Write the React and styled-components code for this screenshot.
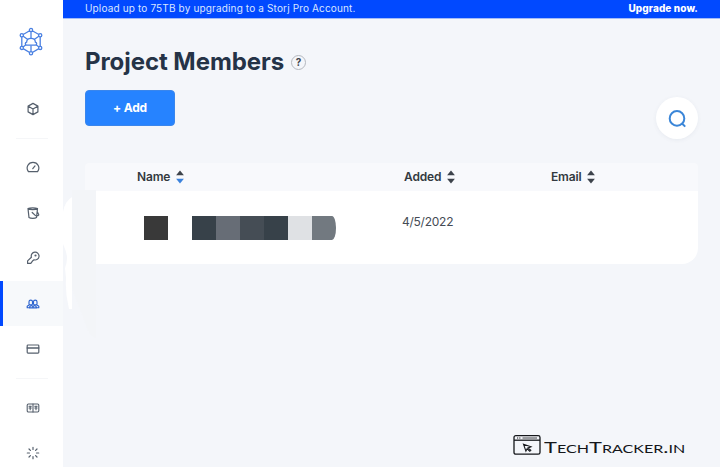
import React from 'react';
import styled, { createGlobalStyle } from 'styled-components';

const GlobalStyle = createGlobalStyle`
  * { box-sizing: border-box; }
  body { margin: 0; overflow: hidden; font-family: Inter, "Liberation Sans", sans-serif; }
`;

const Page = styled.div`
  display: flex;
  width: 720px;
  height: 467px;
  overflow: hidden;
  background: #f4f6fa;
`;

const Sidebar = styled.nav`
  flex: 0 0 63px;
  display: flex;
  flex-direction: column;
  align-items: center;
  background: #fff;
  color: #56606d;
`;

const LogoLink = styled.div`
  flex: 0 0 86px;
  display: flex;
  align-items: flex-start;
  padding: 27px 1px 0 0;
  color: #4a80e2;
`;

const NavItem = styled.div`
  flex: 0 0 45.4px;
  width: 63px;
  display: flex;
  align-items: center;
  justify-content: center;
  border-left: 3px solid ${(p) => (p.$active ? '#0149ff' : 'transparent')};
  background: ${(p) => (p.$active ? '#f7f9fb' : 'transparent')};
  color: ${(p) => (p.$active ? '#2a62cf' : 'inherit')};
`;

const Divider = styled.div`
  flex: 0 0 1px;
  width: 32px;
  margin: 6.3px 0 6px;
  background: #f5f6f8;
`;

const Main = styled.main`
  position: relative;
  flex: 1;
  display: flex;
  flex-direction: column;
  min-width: 0;
`;

const Banner = styled.div`
  flex: 0 0 18px;
  display: flex;
  justify-content: space-between;
  padding: 0 22px;
  background: #0149ff;
  color: #d9e6ff;
  font-size: 10px;
  line-height: 17px;
  white-space: nowrap;
  box-shadow: 0 1px 0 #a3bbf8;
`;

const BannerText = styled.span`
  letter-spacing: 0.15px;
`;

const UpgradeLink = styled.span`
  color: #fff;
  font-weight: 800;
  letter-spacing: 0.1px;
`;

const Content = styled.div`
  flex: 1;
  display: flex;
  flex-direction: column;
  padding: 28px 22px 0;
`;

const TitleRow = styled.div`
  display: flex;
  align-items: center;
  gap: 7px;
  height: 32px;
`;

const Title = styled.h1`
  margin: 0;
  color: #253347;
  font-size: 24px;
  line-height: 32px;
  font-weight: 700;
  letter-spacing: -0.06px;
  white-space: nowrap;
`;

const Help = styled.span`
  display: flex;
  align-items: center;
  justify-content: center;
  width: 15px;
  height: 15px;
  border: 1px solid #b4b8bf;
  border-radius: 50%;
  color: #3c434c;
  font-size: 10px;
  font-weight: 700;
`;

const Actions = styled.div`
  display: flex;
  justify-content: space-between;
  align-items: flex-start;
  height: 73px;
  margin-top: 12px;
`;

const AddButton = styled.button`
  width: 90px;
  height: 36px;
  padding: 0 0 1px;
  border: 1px solid #3a86ec;
  border-radius: 4px;
  background: #2683ff;
  color: #fff;
  font: 700 12px Inter, sans-serif;
  letter-spacing: -0.15px;
`;

const SearchButton = styled.button`
  display: flex;
  align-items: center;
  justify-content: center;
  width: 42px;
  height: 42px;
  margin-top: 7px;
  padding: 1px 0 0;
  border: 0;
  border-radius: 50%;
  background: #fff;
  box-shadow: 0 1px 4px rgba(70, 90, 120, 0.07);
  color: #3b86d8;
`;

const Columns = styled.div`
  display: grid;
  grid-template-columns: 267px 147px 1fr;
  align-items: center;
  flex: 0 0 28px;
  padding: 0 0 1px 52px;
  border-radius: 4px 4px 0 0;
  background: #f8f9fc;
`;

const ColumnHead = styled.div`
  display: flex;
  align-items: center;
  gap: 6px;
  color: #333940;
  font-size: 12px;
  font-weight: 600;
  letter-spacing: -0.16px;
`;

const MemberRow = styled.div`
  display: grid;
  grid-template-columns: 48px 210px 1fr;
  align-items: start;
  height: 73px;
  margin-left: 11px;
  padding: 25px 0 0 48px;
  border-radius: 0 0 16px 0;
  background: #fff;
`;

const Avatar = styled.div`
  width: 24px;
  height: 24px;
  background: #393939;
`;

const MaskedName = styled.div`
  display: flex;
  width: 144px;
  height: 24px;
  overflow: hidden;
  border-radius: 0 4px 4px 0 / 0 12px 12px 0;
`;

const Block = styled.span`
  flex: 1;
  background: ${(p) => p.$tone};
`;

const AddedDate = styled.span`
  margin-top: -2px;
  color: #454b55;
  font-size: 12px;
  line-height: 16px;
  letter-spacing: -0.25px;
`;

const EdgeShapes = styled.svg`
  position: absolute;
  left: 0;
  top: 190px;
`;

const Watermark = styled.div`
  position: absolute;
  left: 450px;
  top: 434px;
  display: flex;
  gap: 3px;
  color: #15171b;
`;

const WatermarkText = styled.span`
  padding-top: 2px;
  font: 400 15px/22px Lato, sans-serif;
  font-variant: small-caps;
  white-space: nowrap;
  transform: scaleX(1.46);
  transform-origin: left;
`;

function Icon({ size = 14, weight = 1.2, children }) {
  return (
    <svg width={size} height={size} viewBox="0 0 14 14" fill="none" stroke="currentColor"
      strokeWidth={weight} strokeLinecap="round" strokeLinejoin="round">
      {children}
    </svg>
  );
}

const Logo = () => (
  <svg width="24" height="30" viewBox="0 0 24 30" fill="none" stroke="currentColor" strokeWidth="1.3">
    <path d="M12 3 21.2 8.3v12.6L12 26.2 2.8 20.9V8.3zM12 3v8.5M2.8 8.3l6 4.2M21.2 8.3l-6 4.2M2.8 20.9l4.4-3.4M21.2 20.9l-4.4-3.4M12 18.3v8" />
    <path d="M7.6 18.2c-1.7-.2-1.7-2.4 0-3 .3-5 8.5-5 8.8 0 1.7.6 1.7 2.8 0 3z" fill="#fff" />
    <g fill="#fff">
      <circle cx="12" cy="3" r="1.6" /><circle cx="21.2" cy="8.3" r="1.6" />
      <circle cx="21.2" cy="20.9" r="1.6" /><circle cx="12" cy="26.2" r="1.6" />
      <circle cx="2.8" cy="20.9" r="1.6" /><circle cx="2.8" cy="8.3" r="1.6" />
    </g>
  </svg>
);

const CubeIcon = () => (
  <Icon><path d="m7 1.4 4.9 2.7v5.8L7 12.6 2.1 9.9V4.1zM2.3 4.2 7 6.9l4.7-2.7M7 6.9v5.5" /></Icon>
);
const GaugeIcon = () => (
  <Icon><path d="M2.4 11.6C-.6 7.5 2.2 2.3 7 2.3s7.6 5.2 4.6 9.3zM6.8 8.7l2.2-2.8" /></Icon>
);
const BucketIcon = () => (
  <Icon>
    <path d="M2 2.6c2-1.1 7.5-1.1 9.5 0l-1 9c-1.5 1.1-6 1.1-7.5 0zM2 2.8c2 1.2 7.5 1.2 9.5 0M6.2 6.5l3.3 3.1M11.3 5.8l1.4 2.7c.3 1-.8 1.5-2 .9" />
  </Icon>
);
const KeyIcon = () => (
  <Icon>
    <path d="M5.4 6.2A3.9 3.9 0 1 1 8 8.8L6.8 9.7l-2 2.7H1.6V9.9z" />
    <circle cx="9.5" cy="4.5" r=".5" />
  </Icon>
);
const TeamIcon = () => (
  <Icon weight={1.15}>
    <path d="M3 7V4.8c0-2.2 3.5-2.2 3.5 0V7c0 1.2-3.5 1.2-3.5 0zM7.5 7V4.8c0-2.2 3.5-2.2 3.5 0V7c0 1.2-3.5 1.2-3.5 0z" />
    <path d="M3 8.1 1.2 9.2v1.5h2M11 8.1l1.8 1.1v1.5h-2M3.5 10.9c0-3 3.5-3 3.5-.5 0-2.5 3.5-2.5 3.5.5z" />
  </Icon>
);
const CardIcon = () => (
  <Icon><rect x="1.2" y="3" width="11.6" height="8.1" rx=".8" /><path d="M1.3 6h11.4" strokeWidth="1.6" /></Icon>
);
const BookIcon = () => (
  <Icon weight={1.1}><rect x="1.2" y="3" width="11.6" height="8" rx="1.2" /><path d="M7 3v8M3 5.3h2.3M3 7h2.3M4.2 5.3v3.5M8.8 5.3h2.3M8.8 7h2.3M10 5.3v3.5" /></Icon>
);
const QuickIcon = () => (
  <Icon weight={1.2}>
    <path d="M7 1.3v2.2M7 10.5v2.2M1.3 7h2.2M10.5 7h2.2M3 3l1.4 1.4M9.6 9.6 11 11M3 11l1.4-1.4M9.6 4.4 11 3" />
  </Icon>
);

const SortArrows = ({ activeDown }) => (
  <svg width="8" height="14" viewBox="0 0 8 14">
    <path d="M4 .4 7.9 5.2H.1z" fill="#3d434b" />
    <path d="M4 13.6 7.9 8.8H.1z" fill={activeDown ? '#3b82dc' : '#3d434b'} />
  </svg>
);

const NAV = [
  { id: 'projects', Glyph: CubeIcon, dividerAfter: true },
  { id: 'dashboard', Glyph: GaugeIcon },
  { id: 'buckets', Glyph: BucketIcon },
  { id: 'access', Glyph: KeyIcon },
  { id: 'users', Glyph: TeamIcon, active: true },
  { id: 'billing', Glyph: CardIcon, dividerAfter: true },
  { id: 'resources', Glyph: BookIcon },
  { id: 'quickstart', Glyph: QuickIcon },
];

const NAME_TONES = ['#374149', '#676d76', '#454d55', '#374149', '#dfe1e4', '#727980'];

export default function App() {
  return (
    <>
      <GlobalStyle />
      <Page>
        <Sidebar>
          <LogoLink><Logo /></LogoLink>
          {NAV.map(({ id, Glyph, active, dividerAfter }) => (
            <React.Fragment key={id}>
              <NavItem $active={active}><Glyph /></NavItem>
              {dividerAfter && <Divider />}
            </React.Fragment>
          ))}
        </Sidebar>
        <Main>
          <Banner>
            <BannerText>Upload up to 75TB by upgrading to a Storj Pro Account.</BannerText>
            <UpgradeLink>Upgrade now.</UpgradeLink>
          </Banner>
          <Content>
            <TitleRow>
              <Title>Project Members</Title>
              <Help>?</Help>
            </TitleRow>
            <Actions>
              <AddButton>+ Add</AddButton>
              <SearchButton aria-label="Search">
                <svg width="20" height="20" viewBox="0 0 20 20" fill="none" stroke="currentColor" strokeWidth="2">
                  <circle cx="10" cy="9.4" r="7.3" /><path d="m14.8 14.2 3.4 3.4" />
                </svg>
              </SearchButton>
            </Actions>
            <Columns>
              <ColumnHead>Name<SortArrows activeDown /></ColumnHead>
              <ColumnHead>Added<SortArrows /></ColumnHead>
              <ColumnHead>Email<SortArrows /></ColumnHead>
            </Columns>
            <MemberRow>
              <Avatar />
              <MaskedName>
                {NAME_TONES.map((tone, i) => <Block key={i} $tone={tone} />)}
              </MaskedName>
              <AddedDate>4/5/2022</AddedDate>
            </MemberRow>
          </Content>
          <EdgeShapes width="33" height="150" viewBox="0 0 33 150" aria-hidden="true">
            <path d="M9 0h24v148q-7-2-10-13L9 98z" fill="#f3f5f8" />
            <path d="M9 7v112H6Q2 103 3 88L2 78Q6 68 2 59L0 54V22Q2 11 9 7z" fill="#fff" />
          </EdgeShapes>
          <Watermark>
            <svg width="28" height="22" viewBox="0 0 28 22" fill="none" stroke="currentColor" strokeWidth="1.3">
              <rect x="1" y="1.6" width="26" height="18.6" rx="1.8" />
              <path d="M1 6.2h26" />
              <path d="M4 4h4" strokeWidth="1" strokeDasharray="1 .8" /><path d="M9.5 4H24" strokeWidth=".8" />
              <path d="m10.5 10.2 7.5 2.5-3 1.2 2.8 2.4-1 .9-2.7-2.4-1.2 2.3z" strokeWidth="1.1" />
            </svg>
            <WatermarkText>TechTracker.in</WatermarkText>
          </Watermark>
        </Main>
      </Page>
    </>
  );
}
